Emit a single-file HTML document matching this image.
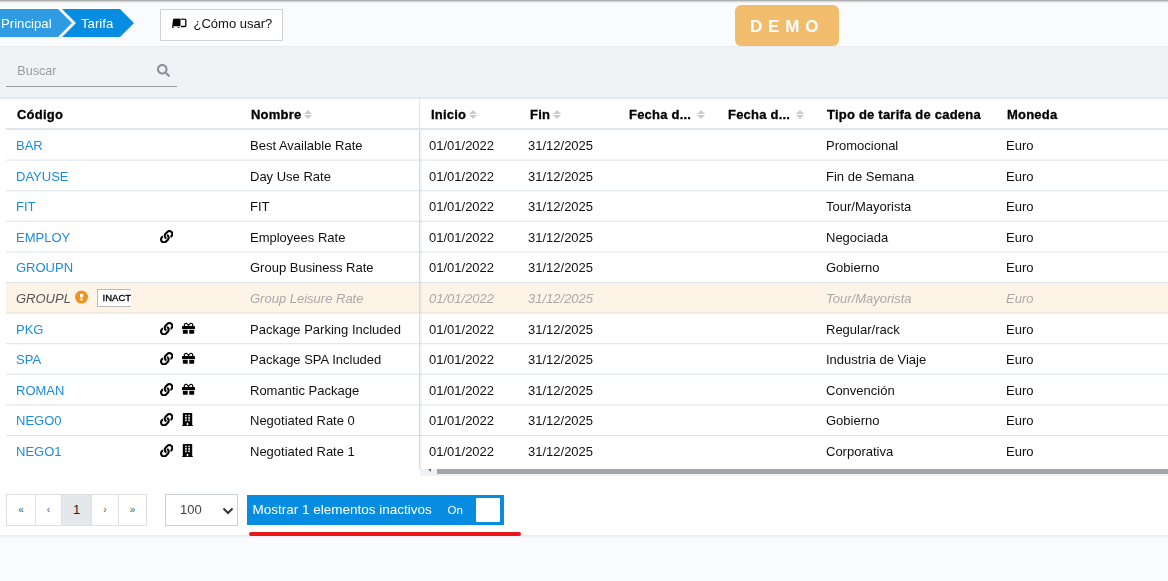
<!DOCTYPE html>
<html lang="es"><head><meta charset="utf-8"><title>Tarifa</title>
<style>
*{box-sizing:border-box;margin:0;padding:0}
html,body{width:1168px;height:581px;overflow:hidden}
body{position:relative;background:#fafbfd;font-family:"Liberation Sans",sans-serif;font-size:13px;color:#111}
.abs{position:absolute}
#topshadow{left:0;top:0;width:1168px;height:3px;background:linear-gradient(#9a9a9a,#d9d9da 50%,#fafbfd)}
#bc1{left:0;top:9px;width:73px;height:28px;background:#2e9be3;clip-path:polygon(0 0,58px 0,72px 14px,58px 28px,0 28px)}
#bc2{left:62px;top:9px;width:73px;height:28px;background:#068ce1;clip-path:polygon(0 0,58px 0,72px 14px,58px 28px,0 28px,14px 14px)}
.bct{color:#fff;font-size:13.2px;line-height:28px;top:9.6px;white-space:nowrap}
#how{left:160px;top:9px;width:123px;height:32px;background:#fff;border:1px solid #ccd3da;font-size:13px;line-height:28px;white-space:nowrap}
#panel{left:0;top:46px;width:1168px;height:53px;background:#eff3f6;border-top:1px solid #e8ecef;border-bottom:2px solid #e4e9ee}
#search{left:6px;top:56px;width:171px;height:31px;border-bottom:1px solid #9c9c9c}
#search span{position:absolute;left:11.3px;top:8px;color:#9c9c9c;font-size:12.6px}
#grid{left:0;top:99px;width:1168px;height:436px;background:#fff}
#hdr{left:6px;top:98px;width:1162px;height:32px;border-bottom:2px solid #dfe5ea}
.h{position:absolute;top:8.7px;font-weight:bold;font-size:13px;letter-spacing:.22px;-webkit-text-stroke:.3px #000;color:#000;white-space:nowrap;line-height:16px}
.row{position:absolute;left:6px;width:1162px;height:29.5px;white-space:nowrap}
.ln{position:absolute;left:6px;width:1162px;height:1px;mix-blend-mode:multiply}
.row .c{position:absolute;top:8px;line-height:16px}
.code{left:10px;color:#1b8ddb}
.name{left:244px}.ini{left:423px}.fin{left:522px}.tipo{left:820px}.mon{left:1000px}
.inact{background:#fdf3e7}
.inact .c{font-style:italic;color:#a9a9a9}
.inact .code{color:#555}
.ic{position:absolute;fill:#000}
.lk{left:154px;top:8px;width:13.4px;height:13.4px}
.gf{left:176px;top:8px;width:13px;height:12.5px}
.bd{left:176px;top:7.6px;width:11px;height:13px}
.warn{position:absolute;left:69px;top:8px;transform:translateY(-.4px);width:13px;height:13px;border-radius:50%;background:#f0921e}
.warn i{position:absolute;left:4.5px;top:3.3px;width:4px;height:4px;background:#fff;clip-path:polygon(0 0,100% 0,75% 100%,25% 100%)}
.warn b{position:absolute;left:5.2px;top:8px;width:2.6px;height:2.2px;background:#fff;border-radius:1px}
.badge{position:absolute;left:91px;top:6px;width:34px;height:17.5px;background:#fff;border:1px solid #b9b9b9;border-right:0;overflow:hidden;font-size:9.5px;font-weight:normal;-webkit-text-stroke:.3px #000;line-height:16px;padding-left:4.6px;color:#000;font-style:normal}
#vsplit{left:419px;top:99px;width:1px;height:370px;background:linear-gradient(#e2e7eb 31px,#d4dae0 31px)}
#vshadow{left:420px;top:130px;width:3px;height:339px;background:linear-gradient(90deg,rgba(40,60,80,.08),rgba(40,60,80,0))}
#hscroll{left:420px;top:469px;width:748px;height:7px;background:#eef2f5}
#hthumb{left:437px;top:469px;width:731px;height:5px;background:#a3a7aa}
#footline{left:0;top:535px;width:1168px;height:4px;background:linear-gradient(#e6eaed,#fafbfd)}
.pg{position:absolute;top:494px;height:32px;width:29px;border:1px solid #dde1e5;background:#fff;text-align:center;line-height:30px;font-size:10px;color:#555}
#sel{left:165px;top:494px;width:73px;height:32px;border:1px solid #cdd2d7;background:#fff}
#sel span{position:absolute;left:14px;top:7px;font-size:13px;color:#444}
#tog{left:247px;top:495px;width:257px;height:30px;background:#068ce1;color:#fff}
#tog .t{position:absolute;left:5.5px;top:7px;font-size:13.5px;white-space:nowrap}
#tog .on{position:absolute;left:200.5px;top:9px;font-size:11.5px}
#tog .k{position:absolute;left:229px;top:3px;width:24px;height:24px;background:#fff;border-radius:1px}
#red{left:249px;top:532px;width:272px;height:4px;background:#e8171c;border-radius:2px}
#demo{left:735px;top:5px;width:104px;height:41px;background:#f2bc6d;border-radius:6px;color:#fff;font-size:17px;font-weight:bold;letter-spacing:5.8px;line-height:41px;padding-top:1px;padding-left:15px;white-space:nowrap}
.sort{display:inline-block;position:relative;width:8px;height:10px;margin-left:3px;vertical-align:-1px}
.sort:before{content:"";position:absolute;left:0;top:0;border:4px solid transparent;border-top:0;border-bottom:4px solid #c9cccf}
.sort:after{content:"";position:absolute;left:0;top:5.5px;border:4px solid transparent;border-bottom:0;border-top:4px solid #c9cccf}
</style></head><body>
<div id="topshadow" class="abs"></div>
<div id="bc1" class="abs"></div><div id="bc2" class="abs"></div>
<div class="abs bct" style="left:1px">Principal</div>
<div class="abs bct" style="left:81px">Tarifa</div>
<div id="how" class="abs"><svg viewBox="0 0 15 10" style="position:absolute;left:11px;top:9px;width:15px;height:10px;transform:translateY(-.7px)"><path d="M0 9.500L1 1.500Q1.200 0.300 2.500 0.300H8.500V8H1.500Q0.800 8.200 0.700 9.500Z" fill="#000"/><path d="M9 0.800H12.500Q13.800 0.800 13.800 2V7Q13.800 8.200 12.500 8.200H9" fill="none" stroke="#000" stroke-width="1.3"/><path d="M0.300 9.300H2M5.500 9.300H7.500" stroke="#000" stroke-width="0.800"/></svg><span style="position:absolute;left:32.500px;top:-0.500px">¿Cómo usar?</span></div>
<div id="demo" class="abs">DEMO</div>
<div id="panel" class="abs"></div>
<div id="search" class="abs"><span>Buscar</span><svg viewBox="0 0 512 512" style="position:absolute;left:151px;top:8px;width:13px;height:13px;fill:#8d9196"><path d="M505 442.700L405.300 343c-4.500-4.500-10.600-7-17-7H372c27.600-35.300 44-79.700 44-128C416 93.100 322.900 0 208 0S0 93.100 0 208s93.100 208 208 208c48.300 0 92.700-16.400 128-44v16.300c0 6.400 2.500 12.500 7 17l99.700 99.700c9.400 9.400 24.600 9.400 33.900 0l28.300-28.300c9.400-9.400 9.400-24.600.1-34zM208 336c-70.700 0-128-57.200-128-128 0-70.700 57.200-128 128-128 70.700 0 128 57.200 128 128 0 70.700-57.200 128-128 128z"/></svg></div>
<div id="grid" class="abs"></div>
<div id="hdr" class="abs">
<span class="h" style="left:11px">Código</span>
<span class="h" style="left:245px">Nombre<i class="sort"></i></span>
<span class="h" style="left:425px">Inicio<i class="sort"></i></span>
<span class="h" style="left:524px">Fin<i class="sort"></i></span>
<span class="h" style="left:623px">Fecha d...<i class="sort" style="margin-left:6px"></i></span>
<span class="h" style="left:722px">Fecha d...<i class="sort" style="margin-left:6px"></i></span>
<span class="h" style="left:821px">Tipo de tarifa de cadena</span>
<span class="h" style="left:1001px">Moneda</span>
</div>
<div class="row" style="top:130.0px"><span class="c code">BAR</span><span class="c name">Best Available Rate</span><span class="c ini">01/01/2022</span><span class="c fin">31/12/2025</span><span class="c tipo">Promocional</span><span class="c mon">Euro</span></div>
<div class="row" style="top:161.0px"><span class="c code">DAYUSE</span><span class="c name">Day Use Rate</span><span class="c ini">01/01/2022</span><span class="c fin">31/12/2025</span><span class="c tipo">Fin de Semana</span><span class="c mon">Euro</span></div>
<div class="row" style="top:191.0px"><span class="c code">FIT</span><span class="c name">FIT</span><span class="c ini">01/01/2022</span><span class="c fin">31/12/2025</span><span class="c tipo">Tour/Mayorista</span><span class="c mon">Euro</span></div>
<div class="row" style="top:222.0px"><span class="c code">EMPLOY</span><svg class="ic lk" viewBox="0 0 512 512"><path d="M326.6 185.4c59.7 59.8 58.9 155.7.4 214.6-.1.1-.2.3-.4.4l-67.2 67.2c-59.3 59.3-155.7 59.3-215 0-59.3-59.3-59.3-155.7 0-215l37.100-37.100c9.800-9.800 26.800-3.300 27.300 10.600.600 17.700 3.800 35.500 9.700 52.700 2 5.800.600 12.300-3.800 16.600l-13.100 13.100c-28 28-28.900 73.700-1.200 102 28 28.600 74.100 28.700 102.300.500l67.200-67.200c28.200-28.200 28.100-73.800 0-101.800-3.700-3.700-7.400-6.600-10.300-8.600a16 16 0 0 1-6.900-12.600c-.400-10.600 3.300-21.500 11.700-29.800l21.100-21.100c5.500-5.500 14.200-6.200 20.600-1.700a152.500 152.500 0 0 1 20.500 17.200zM467.500 44.400c-59.300-59.300-155.700-59.300-215 0l-67.200 67.200c-.1.100-.3.300-.4.400-58.600 58.900-59.400 154.800.4 214.600a152.500 152.500 0 0 0 20.500 17.200c6.400 4.500 15.100 3.800 20.600-1.700l21.100-21.100c8.400-8.400 12.100-19.200 11.700-29.800a16 16 0 0 0-6.900-12.600c-2.900-2-6.600-4.900-10.300-8.600-28.100-28.100-28.200-73.600 0-101.800l67.200-67.200c28.200-28.200 74.300-28.100 102.300.500 27.800 28.300 26.900 73.900-1.200 102l-13.100 13.100c-4.400 4.400-5.800 10.800-3.800 16.600 5.900 17.200 9 35 9.700 52.700.500 13.900 17.500 20.400 27.300 10.600l37.100-37.100c59.300-59.300 59.300-155.700 0-215z"/></svg><span class="c name">Employees Rate</span><span class="c ini">01/01/2022</span><span class="c fin">31/12/2025</span><span class="c tipo">Negociada</span><span class="c mon">Euro</span></div>
<div class="row" style="top:252.0px"><span class="c code">GROUPN</span><span class="c name">Group Business Rate</span><span class="c ini">01/01/2022</span><span class="c fin">31/12/2025</span><span class="c tipo">Gobierno</span><span class="c mon">Euro</span></div>
<div class="row inact" style="top:283.0px"><span class="c code">GROUPL</span><span class="warn"><i></i><b></b></span><span class="badge">INACTIVE</span><span class="c name">Group Leisure Rate</span><span class="c ini">01/01/2022</span><span class="c fin">31/12/2025</span><span class="c tipo">Tour/Mayorista</span><span class="c mon">Euro</span></div>
<div class="row" style="top:314.0px"><span class="c code">PKG</span><svg class="ic lk" viewBox="0 0 512 512"><path d="M326.6 185.4c59.7 59.8 58.9 155.7.4 214.6-.1.1-.2.3-.4.4l-67.2 67.2c-59.3 59.3-155.7 59.3-215 0-59.3-59.3-59.3-155.7 0-215l37.100-37.100c9.800-9.800 26.800-3.300 27.300 10.600.600 17.700 3.800 35.500 9.700 52.700 2 5.800.600 12.300-3.800 16.600l-13.100 13.100c-28 28-28.900 73.700-1.200 102 28 28.600 74.100 28.700 102.300.500l67.200-67.200c28.200-28.200 28.100-73.800 0-101.800-3.700-3.700-7.400-6.600-10.300-8.600a16 16 0 0 1-6.900-12.600c-.400-10.600 3.300-21.500 11.700-29.800l21.100-21.100c5.500-5.500 14.200-6.200 20.600-1.700a152.500 152.500 0 0 1 20.500 17.200zM467.500 44.400c-59.300-59.300-155.700-59.300-215 0l-67.200 67.200c-.1.100-.3.300-.4.400-58.600 58.900-59.400 154.800.4 214.600a152.500 152.500 0 0 0 20.500 17.200c6.400 4.500 15.100 3.800 20.600-1.700l21.100-21.100c8.400-8.400 12.100-19.200 11.700-29.800a16 16 0 0 0-6.900-12.600c-2.900-2-6.600-4.900-10.300-8.600-28.100-28.100-28.200-73.600 0-101.800l67.200-67.200c28.200-28.200 74.300-28.100 102.300.500 27.800 28.300 26.900 73.900-1.200 102l-13.100 13.100c-4.400 4.400-5.800 10.800-3.800 16.600 5.900 17.200 9 35 9.700 52.700.500 13.900 17.500 20.400 27.300 10.600l37.100-37.100c59.300-59.300 59.300-155.700 0-215z"/></svg><svg class="ic gf" viewBox="0 0 512 512" preserveAspectRatio="none"><path d="M32 448c0 17.700 14.300 32 32 32h160V320H32v128zm256 32h160c17.700 0 32-14.300 32-32V320H288v160zm192-320h-42.100c6.200-12.100 10.100-25.500 10.100-40 0-48.500-39.500-88-88-88-41.600 0-68.500 21.300-103 68.300-34.500-47-61.400-68.300-103-68.300-48.500 0-88 39.500-88 88 0 14.500 3.800 27.900 10.100 40H32c-17.700 0-32 14.300-32 32v80c0 8.800 7.200 16 16 16h480c8.800 0 16-7.200 16-16v-80c0-17.700-14.300-32-32-32zm-326.100 0c-22.100 0-40-17.900-40-40s17.900-40 40-40c19.900 0 34.600 3.300 86.100 80h-86.100zm206.100 0h-86.100c51.400-76.500 65.700-80 86.100-80 22.100 0 40 17.900 40 40s-17.900 40-40 40z"/></svg><span class="c name">Package Parking Included</span><span class="c ini">01/01/2022</span><span class="c fin">31/12/2025</span><span class="c tipo">Regular/rack</span><span class="c mon">Euro</span></div>
<div class="row" style="top:344.0px"><span class="c code">SPA</span><svg class="ic lk" viewBox="0 0 512 512"><path d="M326.6 185.4c59.7 59.8 58.9 155.7.4 214.6-.1.1-.2.3-.4.4l-67.2 67.2c-59.3 59.3-155.7 59.3-215 0-59.3-59.3-59.3-155.7 0-215l37.100-37.100c9.800-9.800 26.800-3.300 27.300 10.600.600 17.700 3.800 35.500 9.700 52.700 2 5.800.600 12.300-3.800 16.600l-13.100 13.100c-28 28-28.900 73.700-1.200 102 28 28.600 74.100 28.700 102.300.500l67.200-67.200c28.200-28.200 28.100-73.800 0-101.800-3.700-3.700-7.400-6.600-10.300-8.600a16 16 0 0 1-6.900-12.600c-.400-10.600 3.300-21.500 11.700-29.800l21.100-21.100c5.500-5.500 14.200-6.200 20.600-1.700a152.500 152.500 0 0 1 20.500 17.200zM467.500 44.400c-59.300-59.300-155.700-59.300-215 0l-67.200 67.200c-.1.100-.3.300-.4.400-58.600 58.900-59.400 154.800.4 214.600a152.500 152.500 0 0 0 20.500 17.200c6.400 4.500 15.100 3.800 20.600-1.700l21.100-21.100c8.400-8.400 12.100-19.200 11.700-29.800a16 16 0 0 0-6.900-12.600c-2.900-2-6.600-4.900-10.300-8.600-28.100-28.100-28.200-73.600 0-101.800l67.200-67.200c28.200-28.200 74.300-28.100 102.300.500 27.800 28.300 26.900 73.900-1.200 102l-13.100 13.100c-4.400 4.400-5.800 10.800-3.800 16.600 5.900 17.200 9 35 9.700 52.700.500 13.900 17.500 20.400 27.300 10.600l37.100-37.100c59.300-59.300 59.300-155.700 0-215z"/></svg><svg class="ic gf" viewBox="0 0 512 512" preserveAspectRatio="none"><path d="M32 448c0 17.700 14.300 32 32 32h160V320H32v128zm256 32h160c17.700 0 32-14.300 32-32V320H288v160zm192-320h-42.100c6.200-12.100 10.100-25.500 10.100-40 0-48.500-39.500-88-88-88-41.600 0-68.500 21.300-103 68.300-34.500-47-61.400-68.300-103-68.300-48.500 0-88 39.500-88 88 0 14.500 3.800 27.900 10.100 40H32c-17.700 0-32 14.300-32 32v80c0 8.800 7.200 16 16 16h480c8.800 0 16-7.200 16-16v-80c0-17.700-14.300-32-32-32zm-326.100 0c-22.100 0-40-17.900-40-40s17.900-40 40-40c19.900 0 34.600 3.300 86.100 80h-86.100zm206.100 0h-86.100c51.400-76.500 65.700-80 86.100-80 22.100 0 40 17.900 40 40s-17.900 40-40 40z"/></svg><span class="c name">Package SPA Included</span><span class="c ini">01/01/2022</span><span class="c fin">31/12/2025</span><span class="c tipo">Industria de Viaje</span><span class="c mon">Euro</span></div>
<div class="row" style="top:375.0px"><span class="c code">ROMAN</span><svg class="ic lk" viewBox="0 0 512 512"><path d="M326.6 185.4c59.7 59.8 58.9 155.7.4 214.6-.1.1-.2.3-.4.4l-67.2 67.2c-59.3 59.3-155.7 59.3-215 0-59.3-59.3-59.3-155.7 0-215l37.100-37.100c9.800-9.800 26.800-3.300 27.300 10.600.600 17.700 3.800 35.500 9.700 52.700 2 5.800.600 12.300-3.800 16.600l-13.100 13.100c-28 28-28.900 73.700-1.200 102 28 28.600 74.100 28.700 102.300.500l67.200-67.200c28.200-28.200 28.100-73.800 0-101.800-3.700-3.700-7.400-6.600-10.300-8.600a16 16 0 0 1-6.900-12.600c-.400-10.600 3.300-21.500 11.700-29.800l21.100-21.100c5.500-5.500 14.200-6.200 20.600-1.700a152.500 152.500 0 0 1 20.500 17.200zM467.500 44.400c-59.300-59.300-155.700-59.300-215 0l-67.200 67.200c-.1.100-.3.300-.4.400-58.600 58.900-59.400 154.800.4 214.600a152.500 152.500 0 0 0 20.500 17.200c6.400 4.500 15.100 3.800 20.600-1.700l21.100-21.100c8.400-8.400 12.100-19.200 11.700-29.800a16 16 0 0 0-6.900-12.600c-2.900-2-6.600-4.900-10.300-8.600-28.100-28.100-28.200-73.600 0-101.800l67.200-67.200c28.200-28.200 74.300-28.100 102.300.500 27.800 28.300 26.900 73.900-1.200 102l-13.100 13.100c-4.400 4.400-5.800 10.800-3.800 16.600 5.900 17.200 9 35 9.700 52.700.500 13.900 17.500 20.400 27.300 10.600l37.100-37.100c59.300-59.300 59.300-155.700 0-215z"/></svg><svg class="ic gf" viewBox="0 0 512 512" preserveAspectRatio="none"><path d="M32 448c0 17.700 14.300 32 32 32h160V320H32v128zm256 32h160c17.700 0 32-14.300 32-32V320H288v160zm192-320h-42.100c6.200-12.100 10.100-25.500 10.100-40 0-48.500-39.500-88-88-88-41.600 0-68.500 21.300-103 68.300-34.500-47-61.400-68.300-103-68.300-48.500 0-88 39.500-88 88 0 14.500 3.800 27.900 10.100 40H32c-17.700 0-32 14.300-32 32v80c0 8.800 7.200 16 16 16h480c8.800 0 16-7.200 16-16v-80c0-17.700-14.300-32-32-32zm-326.100 0c-22.100 0-40-17.900-40-40s17.900-40 40-40c19.900 0 34.600 3.300 86.100 80h-86.100zm206.100 0h-86.100c51.400-76.500 65.700-80 86.100-80 22.100 0 40 17.900 40 40s-17.900 40-40 40z"/></svg><span class="c name">Romantic Package</span><span class="c ini">01/01/2022</span><span class="c fin">31/12/2025</span><span class="c tipo">Convención</span><span class="c mon">Euro</span></div>
<div class="row" style="top:405.0px"><span class="c code">NEGO0</span><svg class="ic lk" viewBox="0 0 512 512"><path d="M326.6 185.4c59.7 59.8 58.9 155.7.4 214.6-.1.1-.2.3-.4.4l-67.2 67.2c-59.3 59.3-155.7 59.3-215 0-59.3-59.3-59.3-155.7 0-215l37.100-37.100c9.800-9.800 26.800-3.300 27.300 10.600.600 17.700 3.800 35.500 9.700 52.700 2 5.800.600 12.300-3.800 16.600l-13.100 13.100c-28 28-28.900 73.700-1.200 102 28 28.600 74.100 28.700 102.300.500l67.200-67.200c28.200-28.200 28.100-73.800 0-101.800-3.700-3.700-7.400-6.600-10.300-8.600a16 16 0 0 1-6.900-12.600c-.400-10.600 3.300-21.500 11.700-29.800l21.100-21.100c5.500-5.500 14.200-6.200 20.600-1.700a152.500 152.500 0 0 1 20.500 17.200zM467.500 44.400c-59.300-59.300-155.700-59.300-215 0l-67.200 67.200c-.1.100-.3.300-.4.400-58.600 58.900-59.400 154.800.4 214.600a152.500 152.500 0 0 0 20.500 17.200c6.400 4.500 15.100 3.800 20.600-1.700l21.100-21.100c8.400-8.400 12.100-19.200 11.700-29.800a16 16 0 0 0-6.900-12.600c-2.900-2-6.600-4.900-10.300-8.600-28.100-28.100-28.200-73.600 0-101.800l67.200-67.200c28.200-28.200 74.300-28.100 102.300.500 27.800 28.300 26.900 73.900-1.200 102l-13.100 13.100c-4.400 4.400-5.800 10.800-3.800 16.600 5.900 17.200 9 35 9.700 52.700.500 13.900 17.500 20.400 27.300 10.600l37.100-37.100c59.300-59.300 59.300-155.700 0-215z"/></svg><svg class="ic bd" viewBox="0 0 448 512" preserveAspectRatio="none"><path d="M436 480h-20V24c0-13.255-10.745-24-24-24H56C42.745 0 32 10.745 32 24v456H12c-6.627 0-12 5.373-12 12v20h448v-20c0-6.627-5.373-12-12-12zM128 76c0-6.627 5.373-12 12-12h40c6.627 0 12 5.373 12 12v40c0 6.627-5.373 12-12 12h-40c-6.627 0-12-5.373-12-12V76zm0 96c0-6.627 5.373-12 12-12h40c6.627 0 12 5.373 12 12v40c0 6.627-5.373 12-12 12h-40c-6.627 0-12-5.373-12-12v-40zm52 148h-40c-6.627 0-12-5.373-12-12v-40c0-6.627 5.373-12 12-12h40c6.627 0 12 5.373 12 12v40c0 6.627-5.373 12-12 12zm76 160h-64v-84c0-6.627 5.373-12 12-12h40c6.627 0 12 5.373 12 12v84zm64-172c0 6.627-5.373 12-12 12h-40c-6.627 0-12-5.373-12-12v-40c0-6.627 5.373-12 12-12h40c6.627 0 12 5.373 12 12v40zm0-96c0 6.627-5.373 12-12 12h-40c-6.627 0-12-5.373-12-12v-40c0-6.627 5.373-12 12-12h40c6.627 0 12 5.373 12 12v40zm0-96c0 6.627-5.373 12-12 12h-40c-6.627 0-12-5.373-12-12V76c0-6.627 5.373-12 12-12h40c6.627 0 12 5.373 12 12v40z"/></svg><span class="c name">Negotiated Rate 0</span><span class="c ini">01/01/2022</span><span class="c fin">31/12/2025</span><span class="c tipo">Gobierno</span><span class="c mon">Euro</span></div>
<div class="row" style="top:436.0px"><span class="c code">NEGO1</span><svg class="ic lk" viewBox="0 0 512 512"><path d="M326.6 185.4c59.7 59.8 58.9 155.7.4 214.6-.1.1-.2.3-.4.4l-67.2 67.2c-59.3 59.3-155.7 59.3-215 0-59.3-59.3-59.3-155.7 0-215l37.100-37.100c9.800-9.800 26.800-3.300 27.300 10.600.600 17.700 3.800 35.500 9.700 52.700 2 5.800.600 12.300-3.800 16.600l-13.100 13.100c-28 28-28.900 73.700-1.200 102 28 28.600 74.100 28.700 102.300.500l67.200-67.200c28.200-28.200 28.100-73.800 0-101.800-3.700-3.700-7.400-6.600-10.300-8.600a16 16 0 0 1-6.900-12.600c-.400-10.600 3.300-21.500 11.700-29.800l21.100-21.100c5.500-5.500 14.200-6.200 20.600-1.700a152.500 152.500 0 0 1 20.500 17.200zM467.500 44.400c-59.300-59.300-155.700-59.300-215 0l-67.200 67.200c-.1.100-.3.300-.4.400-58.600 58.900-59.400 154.800.4 214.600a152.500 152.500 0 0 0 20.500 17.200c6.400 4.500 15.100 3.800 20.600-1.700l21.100-21.100c8.400-8.400 12.100-19.200 11.700-29.800a16 16 0 0 0-6.900-12.600c-2.900-2-6.600-4.900-10.300-8.600-28.100-28.100-28.200-73.600 0-101.800l67.200-67.200c28.200-28.200 74.300-28.100 102.300.500 27.800 28.300 26.900 73.900-1.200 102l-13.100 13.100c-4.400 4.400-5.800 10.800-3.800 16.600 5.900 17.200 9 35 9.700 52.700.500 13.900 17.500 20.400 27.300 10.600l37.100-37.100c59.300-59.300 59.300-155.700 0-215z"/></svg><svg class="ic bd" viewBox="0 0 448 512" preserveAspectRatio="none"><path d="M436 480h-20V24c0-13.255-10.745-24-24-24H56C42.745 0 32 10.745 32 24v456H12c-6.627 0-12 5.373-12 12v20h448v-20c0-6.627-5.373-12-12-12zM128 76c0-6.627 5.373-12 12-12h40c6.627 0 12 5.373 12 12v40c0 6.627-5.373 12-12 12h-40c-6.627 0-12-5.373-12-12V76zm0 96c0-6.627 5.373-12 12-12h40c6.627 0 12 5.373 12 12v40c0 6.627-5.373 12-12 12h-40c-6.627 0-12-5.373-12-12v-40zm52 148h-40c-6.627 0-12-5.373-12-12v-40c0-6.627 5.373-12 12-12h40c6.627 0 12 5.373 12 12v40c0 6.627-5.373 12-12 12zm76 160h-64v-84c0-6.627 5.373-12 12-12h40c6.627 0 12 5.373 12 12v84zm64-172c0 6.627-5.373 12-12 12h-40c-6.627 0-12-5.373-12-12v-40c0-6.627 5.373-12 12-12h40c6.627 0 12 5.373 12 12v40zm0-96c0 6.627-5.373 12-12 12h-40c-6.627 0-12-5.373-12-12v-40c0-6.627 5.373-12 12-12h40c6.627 0 12 5.373 12 12v40zm0-96c0 6.627-5.373 12-12 12h-40c-6.627 0-12-5.373-12-12V76c0-6.627 5.373-12 12-12h40c6.627 0 12 5.373 12 12v40z"/></svg><span class="c name">Negotiated Rate 1</span><span class="c ini">01/01/2022</span><span class="c fin">31/12/2025</span><span class="c tipo">Corporativa</span><span class="c mon">Euro</span></div>
<div class="ln" style="top:159px;background:#f1f4f6"></div>
<div class="ln" style="top:160px;background:#ebeef2"></div>
<div class="ln" style="top:190px;background:#e4e9ed"></div>
<div class="ln" style="top:191px;background:#f8f9fb"></div>
<div class="ln" style="top:220px;background:#f8f9fb"></div>
<div class="ln" style="top:221px;background:#e4e9ed"></div>
<div class="ln" style="top:251px;background:#ebeef2"></div>
<div class="ln" style="top:252px;background:#f1f4f6"></div>
<div class="ln" style="top:282px;background:#dde3e9"></div>
<div class="ln" style="top:312px;background:#f1f4f6"></div>
<div class="ln" style="top:313px;background:#ebeef2"></div>
<div class="ln" style="top:343px;background:#e4e9ed"></div>
<div class="ln" style="top:344px;background:#f8f9fb"></div>
<div class="ln" style="top:373px;background:#f8f9fb"></div>
<div class="ln" style="top:374px;background:#e4e9ed"></div>
<div class="ln" style="top:404px;background:#ebeef2"></div>
<div class="ln" style="top:405px;background:#f1f4f6"></div>
<div class="ln" style="top:435px;background:#dde3e9"></div>
<div id="vsplit" class="abs"></div><div id="vshadow" class="abs"></div>
<div id="hscroll" class="abs"></div><div class="abs" style="left:428px;top:469px;width:3px;height:3px;background:#666;clip-path:polygon(0 0,100% 0,100% 100%)"></div><div id="hthumb" class="abs"></div>
<div class="pg" style="left:6px;width:30px">«</div><div class="pg" style="left:35px;width:27px">‹</div><div class="pg" style="left:61px;width:31px;background:#e4e8eb;color:#222;font-size:13px;line-height:30px">1</div><div class="pg" style="left:91px;width:28px">›</div><div class="pg" style="left:118px;width:29px">»</div>
<div id="sel" class="abs"><span>100</span><svg viewBox="0 0 12 8" style="position:absolute;left:56px;top:12px;width:12px;height:8px"><path d="M1.500 1.500L6 6l4.500-4.500" fill="none" stroke="#333" stroke-width="2"/></svg></div>
<div id="tog" class="abs"><span class="t">Mostrar 1 elementos inactivos</span><span class="on">On</span><span class="k"></span></div>
<div id="footline" class="abs"></div>
<div id="red" class="abs"></div>
</body></html>
